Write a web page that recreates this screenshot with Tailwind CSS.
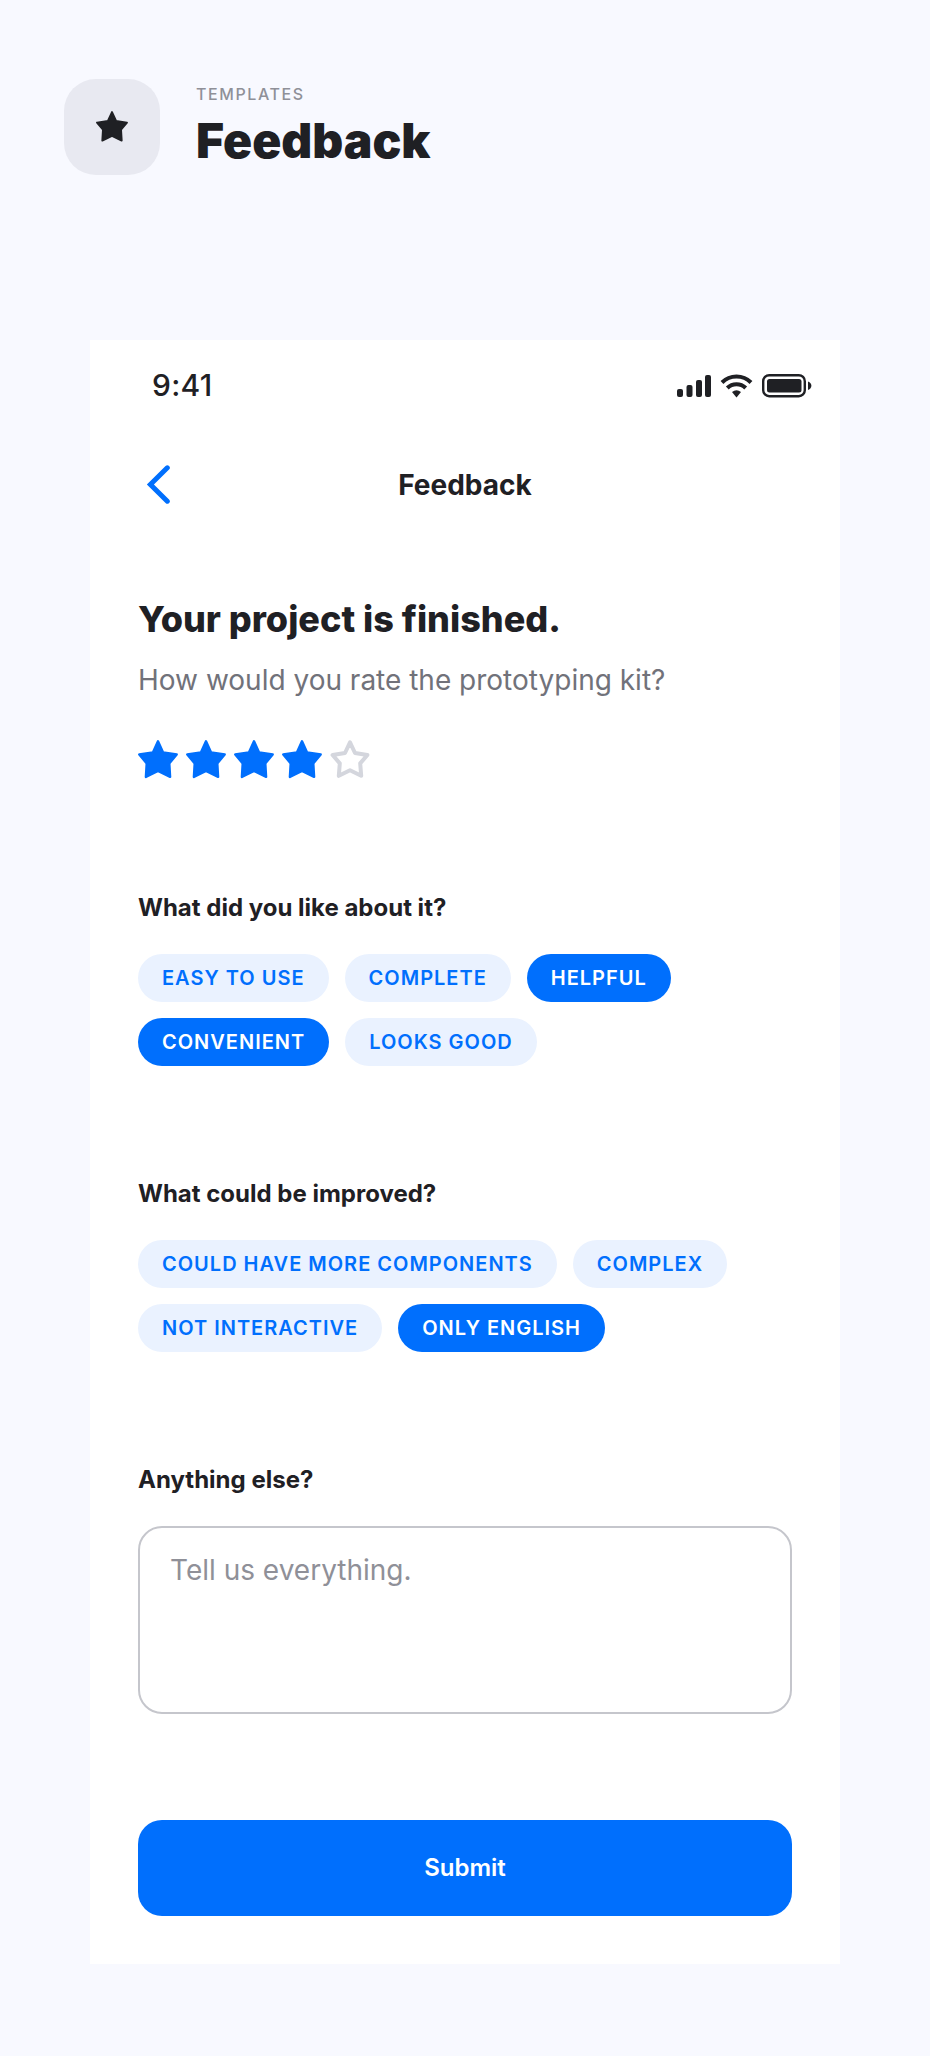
<!DOCTYPE html>
<html lang="en">
<head>
<meta charset="utf-8">
<meta name="viewport" content="width=device-width, initial-scale=1">
<title>Feedback</title>
<script src="https://cdn.jsdelivr.net/npm/@tailwindcss/browser@4"></script>
</head>
<body class="min-h-screen bg-[#f8f9ff] pb-[92px] font-['Inter',sans-serif] text-[#1f2024]">
<svg class="hidden" aria-hidden="true">
  <symbol id="star" viewBox="0 0 40 40">
    <path d="M20 1.3 25.1 12.4 38.7 14.5 31.3 23.4 32.1 36.9 20 31 7.9 36.9 8.7 23.4 1.3 14.5 14.9 12.4Z" fill="currentColor" stroke="currentColor" stroke-width="2.4" stroke-linejoin="round"/>
  </symbol>
  <symbol id="star-outline" viewBox="0 0 40 40">
    <path d="M20 2.4 25 13 37.4 15 30.2 23.4 31.2 35.8 20 30.2 8.8 35.8 9.8 23.4 2.6 15 15 13Z" fill="none" stroke="currentColor" stroke-width="4" stroke-linejoin="round"/>
  </symbol>
</svg>

<header class="flex items-start gap-9 px-16 pt-[79px]">
  <div class="flex size-24 items-center justify-center rounded-[32px] bg-[#e8e9f1]">
    <svg class="size-8" aria-hidden="true"><use href="#star"/></svg>
  </div>
  <div class="pt-[5px]">
    <p class="text-base leading-5 font-medium tracking-widest text-[#8f9098]">TEMPLATES</p>
    <h1 class="mt-2 text-5xl leading-[58px] font-black">Feedback</h1>
  </div>
</header>

<main class="mx-[90px] mt-[165px] bg-white pb-12">
  <div class="flex h-[90px] items-center justify-between pr-7 pl-[62px]">
    <span class="text-[30px] leading-9 font-medium tracking-[0.01em]">9:41</span>
    <svg class="h-[26px] w-[136px]" viewBox="0 0 136 26" fill="#1f2024" aria-hidden="true">
      <rect x="1" y="17" width="6" height="8" rx="2"/>
      <rect x="10.500" y="13" width="6" height="12" rx="2"/>
      <rect x="20" y="8" width="6" height="17" rx="2"/>
      <rect x="29" y="3" width="6" height="22" rx="2"/>
      <g fill="none" stroke="#1f2024" stroke-width="4">
        <path d="M46 10.500A20.500 20.500 0 0 1 75 10.500"/>
        <path d="M51.300 16A13 13 0 0 1 69.700 16"/>
      </g>
      <path d="M56 20Q60.500 16.600 65 20L60.500 25.500Z"/>
      <rect x="87.200" y="3.200" width="41.600" height="21" rx="6" fill="none" stroke="#1f2024" stroke-width="2.400"/>
      <rect x="91" y="7" width="34.500" height="13.500" rx="2.500"/>
      <path d="M132 9.500C136.500 11 136.500 16.500 132 18Z"/>
    </svg>
  </div>

  <nav class="grid h-[109px] grid-cols-[1fr_auto_1fr] items-center px-12">
    <button type="button" aria-label="Back" class="flex h-12 w-10 items-center justify-center justify-self-start text-[#006ffd]">
      <svg class="h-10 w-6" viewBox="0 0 24 40" fill="none" stroke="currentColor" stroke-width="5" stroke-linecap="round" aria-hidden="true"><path d="M21.300 2.800 4.400 19.500 21.300 36.200"/></svg>
    </button>
    <span class="text-[28px] leading-9 font-bold">Feedback</span>
  </nav>

  <form class="px-12 pt-[58px]">
    <h2 class="text-4xl leading-[44px] font-extrabold">Your project is finished.</h2>
    <p id="rate" class="mt-[19px] text-[28px] leading-10 font-normal text-[#71727a]">How would you rate the prototyping kit?</p>

    <div role="radiogroup" aria-labelledby="rate" class="relative mt-10 flex gap-2">
      <label class="size-10 text-[#006ffd]"><input type="radio" name="rating" value="1" aria-label="1 star" class="sr-only"><svg class="size-10" aria-hidden="true"><use href="#star"/></svg></label>
      <label class="size-10 text-[#006ffd]"><input type="radio" name="rating" value="2" aria-label="2 stars" class="sr-only"><svg class="size-10" aria-hidden="true"><use href="#star"/></svg></label>
      <label class="size-10 text-[#006ffd]"><input type="radio" name="rating" value="3" aria-label="3 stars" class="sr-only"><svg class="size-10" aria-hidden="true"><use href="#star"/></svg></label>
      <label class="size-10 text-[#006ffd]"><input type="radio" name="rating" value="4" aria-label="4 stars" class="sr-only" checked><svg class="size-10" aria-hidden="true"><use href="#star"/></svg></label>
      <label class="size-10 text-[#d4d6dd]"><input type="radio" name="rating" value="5" aria-label="5 stars" class="sr-only"><svg class="size-10" aria-hidden="true"><use href="#star-outline"/></svg></label>
    </div>

    <section class="mt-28">
      <h3 class="text-2xl leading-8 font-bold">What did you like about it?</h3>
      <div class="mt-[30px] flex flex-wrap gap-4">
        <button type="button" aria-pressed="false" class="h-12 rounded-full bg-[#eaf2ff] px-6 text-xl font-semibold tracking-wider text-[#006ffd]">EASY TO USE</button>
        <button type="button" aria-pressed="false" class="h-12 rounded-full bg-[#eaf2ff] px-6 text-xl font-semibold tracking-wider text-[#006ffd]">COMPLETE</button>
        <button type="button" aria-pressed="true" class="h-12 rounded-full bg-[#006ffd] px-6 text-xl font-semibold tracking-wider text-white">HELPFUL</button>
        <button type="button" aria-pressed="true" class="h-12 rounded-full bg-[#006ffd] px-6 text-xl font-semibold tracking-wider text-white">CONVENIENT</button>
        <button type="button" aria-pressed="false" class="h-12 rounded-full bg-[#eaf2ff] px-6 text-xl font-semibold tracking-wider text-[#006ffd]">LOOKS GOOD</button>
      </div>
    </section>

    <section class="mt-28">
      <h3 class="text-2xl leading-8 font-bold">What could be improved?</h3>
      <div class="mt-[30px] flex flex-wrap gap-4">
        <button type="button" aria-pressed="false" class="h-12 rounded-full bg-[#eaf2ff] px-6 text-xl font-semibold tracking-wider text-[#006ffd]">COULD HAVE MORE COMPONENTS</button>
        <button type="button" aria-pressed="false" class="h-12 rounded-full bg-[#eaf2ff] px-6 text-xl font-semibold tracking-wider text-[#006ffd]">COMPLEX</button>
        <button type="button" aria-pressed="false" class="h-12 rounded-full bg-[#eaf2ff] px-6 text-xl font-semibold tracking-wider text-[#006ffd]">NOT INTERACTIVE</button>
        <button type="button" aria-pressed="true" class="h-12 rounded-full bg-[#006ffd] px-6 text-xl font-semibold tracking-wider text-white">ONLY ENGLISH</button>
      </div>
    </section>

    <section class="mt-28">
      <label for="more" class="block text-2xl leading-8 font-bold">Anything else?</label>
      <textarea id="more" placeholder="Tell us everything." class="mt-[30px] block h-[188px] w-full resize-none rounded-3xl border-2 border-[#c5c6cc] px-[30px] py-[22px] text-[28px] leading-10 font-normal placeholder:text-[#8f9098]"></textarea>
    </section>

    <button type="submit" class="mt-[106px] h-24 w-full rounded-3xl bg-[#006ffd] text-2xl font-semibold text-white">Submit</button>
  </form>
</main>
</body>
</html>
